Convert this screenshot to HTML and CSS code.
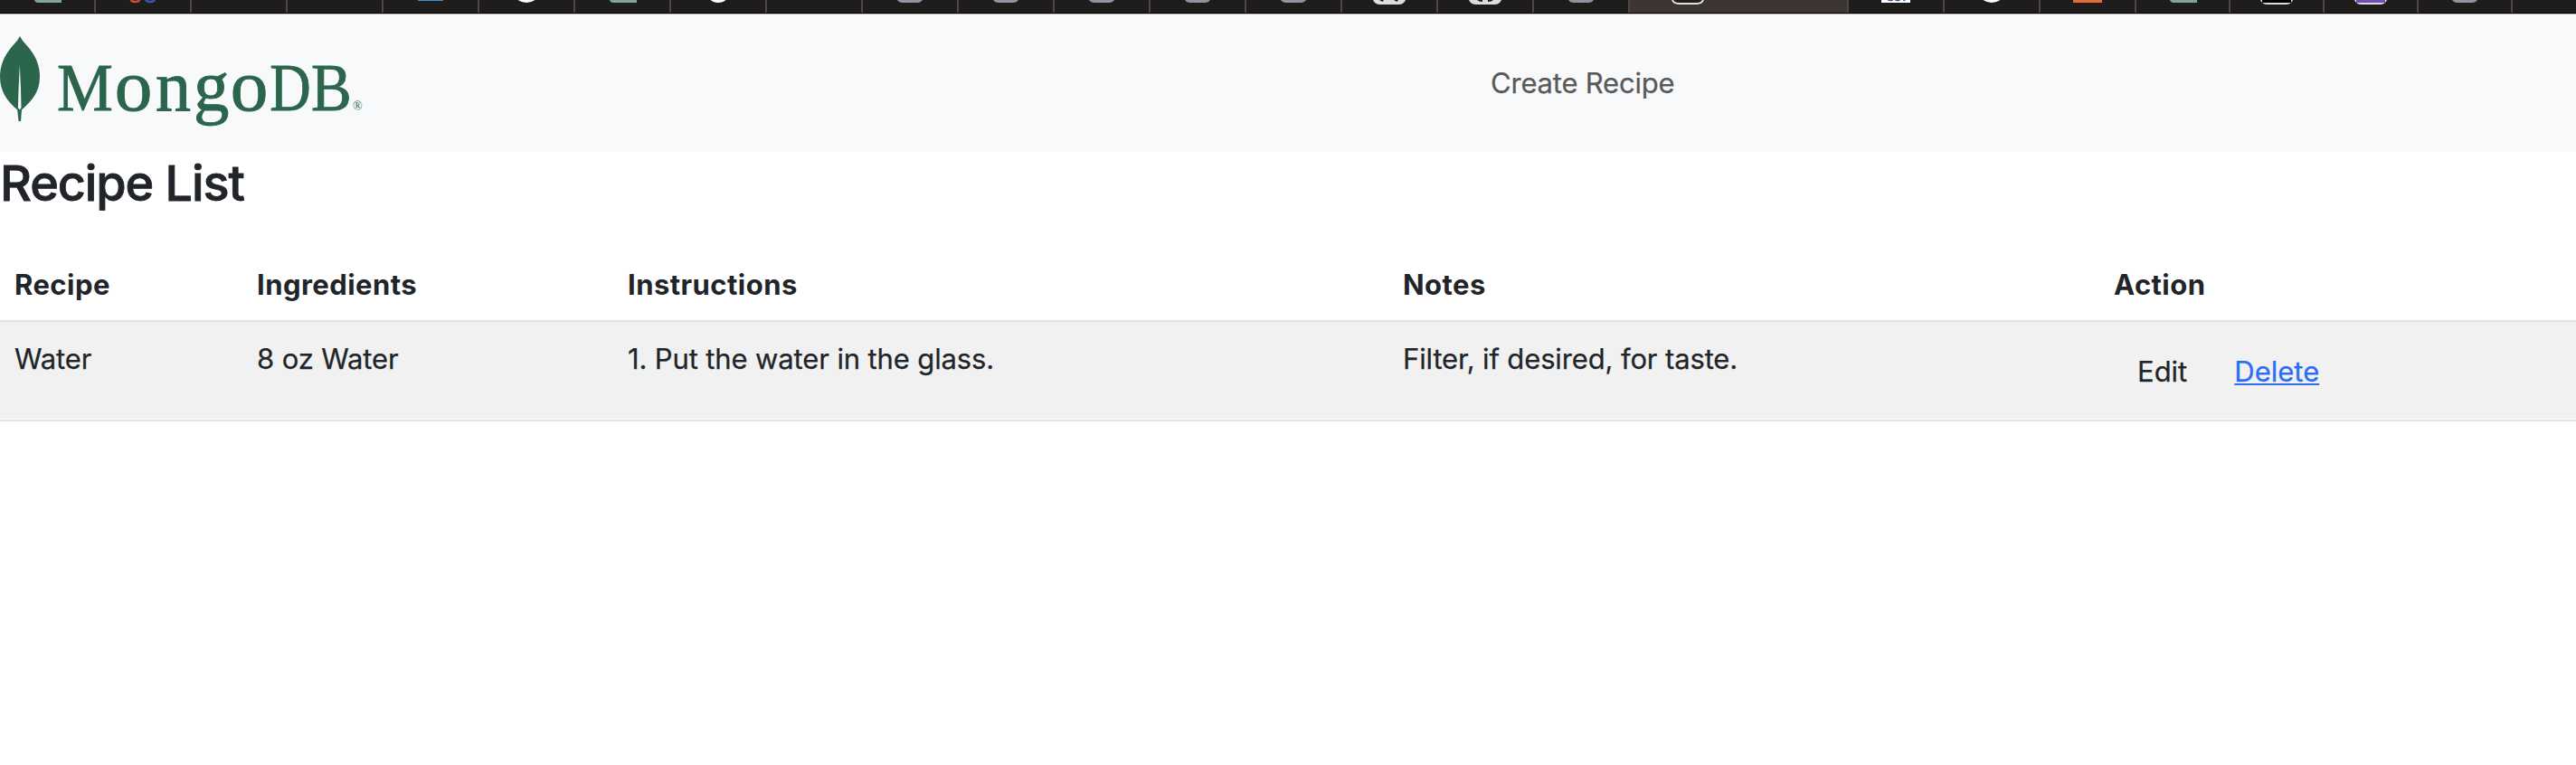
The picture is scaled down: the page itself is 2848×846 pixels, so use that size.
FILE: index.html
```html
<!DOCTYPE html>
<html lang="en">
<head>
<meta charset="utf-8">
<title>Recipe List</title>
<link rel="stylesheet" href="styles.css">
</head>
<body>
<svg class="defs" width="0" height="0" aria-hidden="true">
  <symbol id="teal" viewBox="0 0 36 6"><path d="M4 0H34V3H8Q5 3 4 0Z" fill="#7fa59b"/></symbol>
  <symbol id="rings" viewBox="0 0 36 6"><path d="M4.500 0Q6 2 9.500 2T14.500 0" fill="none" stroke="#c64e36" stroke-width="2.500"/><path d="M21 0Q22.500 2 26 2T31 0" fill="none" stroke="#3c58a5" stroke-width="2.500"/></symbol>
  <symbol id="blue" viewBox="0 0 36 6"><path d="M4 0H32V1H4Z" fill="#3a94d4"/></symbol>
  <symbol id="circle" viewBox="0 0 36 6"><path d="M8.500 0H27.500Q23 3 18 3T8.500 0Z" fill="#fff"/></symbol>
  <symbol id="cat" viewBox="0 0 36 6"><path d="M9.500 0H26.500Q23 3 18 3T9.500 0Z" fill="#fff"/></symbol>
  <symbol id="grey" viewBox="0 0 36 6"><path d="M4 0H32Q30 3 26 3H10Q6 3 4 0Z" fill="#9092a1"/></symbol>
  <symbol id="skull" viewBox="0 0 36 6"><path d="M0 0H36Q34 5 28 5H8Q2 5 0 0Z" fill="#dcdcdc"/><path d="M7 0H12L10.500 2ZM23 0H28L26.500 2Z" fill="#1f1d1b"/></symbol>
  <symbol id="face" viewBox="0 0 36 6"><path d="M0 0H36Q34 5 28 5H8Q2 5 0 0Z" fill="#dcdcdc"/><path d="M9 0H15V2Q11 2 9 0ZM21 0H27Q25 2 21 2Z" fill="#1f1d1b"/></symbol>
  <symbol id="frame" viewBox="0 0 36 6"><path d="M1 0Q2.500 4 8 4H28Q33.500 4 35 0" fill="#211f1d" stroke="#e2e2e0" stroke-width="2"/></symbol>
  <symbol id="white" viewBox="0 0 36 6"><path d="M2 0H34V3H2Z" fill="#fff"/><path d="M9 0H15Q13 2 9 0ZM17 0H23Q20 2 17 0ZM26 0H28V1Z" fill="#224b91" stroke="#224b91" stroke-width=".6"/></symbol>
  <symbol id="orange" viewBox="0 0 36 6"><path d="M2 0H34V3H2Z" fill="#e16c36"/></symbol>
  <symbol id="black" viewBox="0 0 36 6"><path d="M0 0H36Q34 5 28 5H8Q2 5 0 0Z" fill="#dcdcd8"/><path d="M2 0H34V3H2Z" fill="#000"/></symbol>
  <symbol id="purple" viewBox="0 0 36 6"><path d="M0 0H36Q34 5 28 5H8Q2 5 0 0Z" fill="#dcdcd8"/><path d="M2 0H34V3H2Z" fill="#704eb5"/></symbol>
</svg>

<div class="tabs">
  <div class="tab"><svg><use href="#teal"/></svg></div>
  <div class="tab"><svg><use href="#rings"/></svg></div>
  <div class="tab"></div>
  <div class="tab"></div>
  <div class="tab"><svg><use href="#blue"/></svg></div>
  <div class="tab"><svg><use href="#circle"/></svg></div>
  <div class="tab"><svg><use href="#teal"/></svg></div>
  <div class="tab"><svg><use href="#cat"/></svg></div>
  <div class="tab"></div>
  <div class="tab"><svg><use href="#grey"/></svg></div>
  <div class="tab"><svg><use href="#grey"/></svg></div>
  <div class="tab"><svg><use href="#grey"/></svg></div>
  <div class="tab"><svg><use href="#grey"/></svg></div>
  <div class="tab"><svg><use href="#grey"/></svg></div>
  <div class="tab"><svg><use href="#skull"/></svg></div>
  <div class="tab"><svg><use href="#face"/></svg></div>
  <div class="tab"><svg><use href="#grey"/></svg></div>
  <div class="tab tab-active"><svg><use href="#frame"/></svg></div>
  <div class="tab"><svg><use href="#white"/></svg></div>
  <div class="tab"><svg><use href="#circle"/></svg></div>
  <div class="tab"><svg><use href="#orange"/></svg></div>
  <div class="tab tab-narrow"><svg><use href="#teal"/></svg></div>
  <div class="tab tab-narrow"><svg><use href="#black"/></svg></div>
  <div class="tab tab-narrow"><svg><use href="#purple"/></svg></div>
  <div class="tab tab-narrow"><svg><use href="#grey"/></svg></div>
</div>

<nav class="navbar">
  <svg class="logo" width="408" height="112" viewBox="0 32 408 112" role="img" aria-label="MongoDB">
    <path d="M22 40C25 46 29 49 32 53C40 63 44 73 44 85C44 101 36 111 24 121.500L23 134H20.500L19.200 121.500C8 112 0 101 0 85C0 73 4 63 12 53C15 49 19 46 22 40Z"/>
    <path class="vein" d="M21.800 72Q23.200 96 23.500 119L21.800 121.500L19.900 119Q20.500 96 21.800 72Z"/>
    <g class="wordmark">
      <text transform="translate(63 122) scale(.928 1)">M</text>
      <text transform="translate(126.700 122) scale(1.110 1.060)">o</text>
      <text transform="translate(172 122) scale(1.040 1.060)">n</text>
      <text transform="translate(214 122) scale(1.050 1.060)">g</text>
      <text transform="translate(254.700 122) scale(1.110 1.060)">o</text>
      <text transform="translate(298.200 122) scale(.840 1)">D</text>
      <text transform="translate(344 122) scale(.893 1)">B</text>
    </g>
    <text class="mark" x="390" y="121.500">®</text>
  </svg>
  <a class="nav-link">Create Recipe</a>
</nav>

<main>
  <h3 class="title">Recipe List</h3>
  <table class="table">
    <colgroup><col class="c-recipe"><col class="c-ingredients"><col class="c-instructions"><col class="c-notes"><col></colgroup>
    <thead>
      <tr><th>Recipe</th><th>Ingredients</th><th>Instructions</th><th>Notes</th><th>Action</th></tr>
    </thead>
    <tbody>
      <tr>
        <td>Water</td><td>8 oz Water</td><td>1. Put the water in the glass.</td><td>Filter, if desired, for taste.</td>
        <td><div class="actions"><a>Edit</a><a class="delete">Delete</a></div></td>
      </tr>
    </tbody>
  </table>
</main>
</body>
</html>
```
FILE: styles.css
```css
* { box-sizing: border-box; }
body {
  margin: 0;
  background: #fff;
  color: #212529;
  font: 400 31px/48px Inter, "Liberation Sans", sans-serif;
  letter-spacing: -.13px;
  -webkit-text-stroke: .25px currentColor;
}
.defs { display: block; }
.tabs {
  display: flex;
  height: 16px;
  background: #1f1d1b;
  border-bottom: 1px solid #b9b4b4;
  box-shadow: inset 0 -1px #000;
}
.tab {
  flex: none;
  width: 106px;
  height: 14px;
  padding-left: 34px;
  border-right: 2px solid #4e4745;
}
.tab svg { display: block; width: 36px; height: 6px; }
.tab-active { width: 242px; padding-left: 46px; background: #3c3532; }
.tab-narrow { width: 104px; padding-left: 33px; }

.navbar {
  display: flex;
  align-items: flex-start;
  height: 152px;
  padding-top: 16px;
  background: #f8f9fb;
}
.logo { flex: none; fill: #2b664c; -webkit-text-stroke: 0; }
.logo .vein { fill: #f8f9fb; }
.wordmark {
  font: 75px "Liberation Serif", serif;
  letter-spacing: 0;
  stroke: #2b664c;
  stroke-width: .9px;
}
.mark { font: 14px "Liberation Serif", serif; letter-spacing: 0; }
.nav-link {
  margin: 36px 0 0 1240px;
  color: #595959;
  letter-spacing: -.2px;
}

.title {
  margin: 0;
  height: 106px;
  padding-top: 1px;
  font-size: 54px;
  font-weight: 500;
  line-height: 67px;
  letter-spacing: -1.1px;
  -webkit-text-stroke-width: .8px;
}
.table {
  width: 100%;
  table-layout: fixed;
  border-collapse: separate;
  border-spacing: 0;
}
.c-recipe { width: 268px; }
.c-ingredients { width: 410px; }
.c-instructions { width: 857px; }
.c-notes { width: 786px; }
th, td {
  padding: 17px 16px 15px;
  text-align: left;
  vertical-align: top;
  border-bottom: 2px solid #dee2e6;
}
th { height: 82px; font-weight: 700; letter-spacing: .45px; -webkit-text-stroke-width: 0; }
td {
  height: 110px;
  background: #f1f1f1;
  background-clip: padding-box;
  box-shadow: inset 0 -1px #fff;
}
.actions { display: flex; gap: 52px; padding: 14px 0 0 26px; letter-spacing: 0; }
.delete {
  color: #2b6ef6;
  text-decoration: underline;
  text-decoration-thickness: 2px;
  text-underline-offset: 2px;
  text-decoration-skip-ink: none;
}
```
